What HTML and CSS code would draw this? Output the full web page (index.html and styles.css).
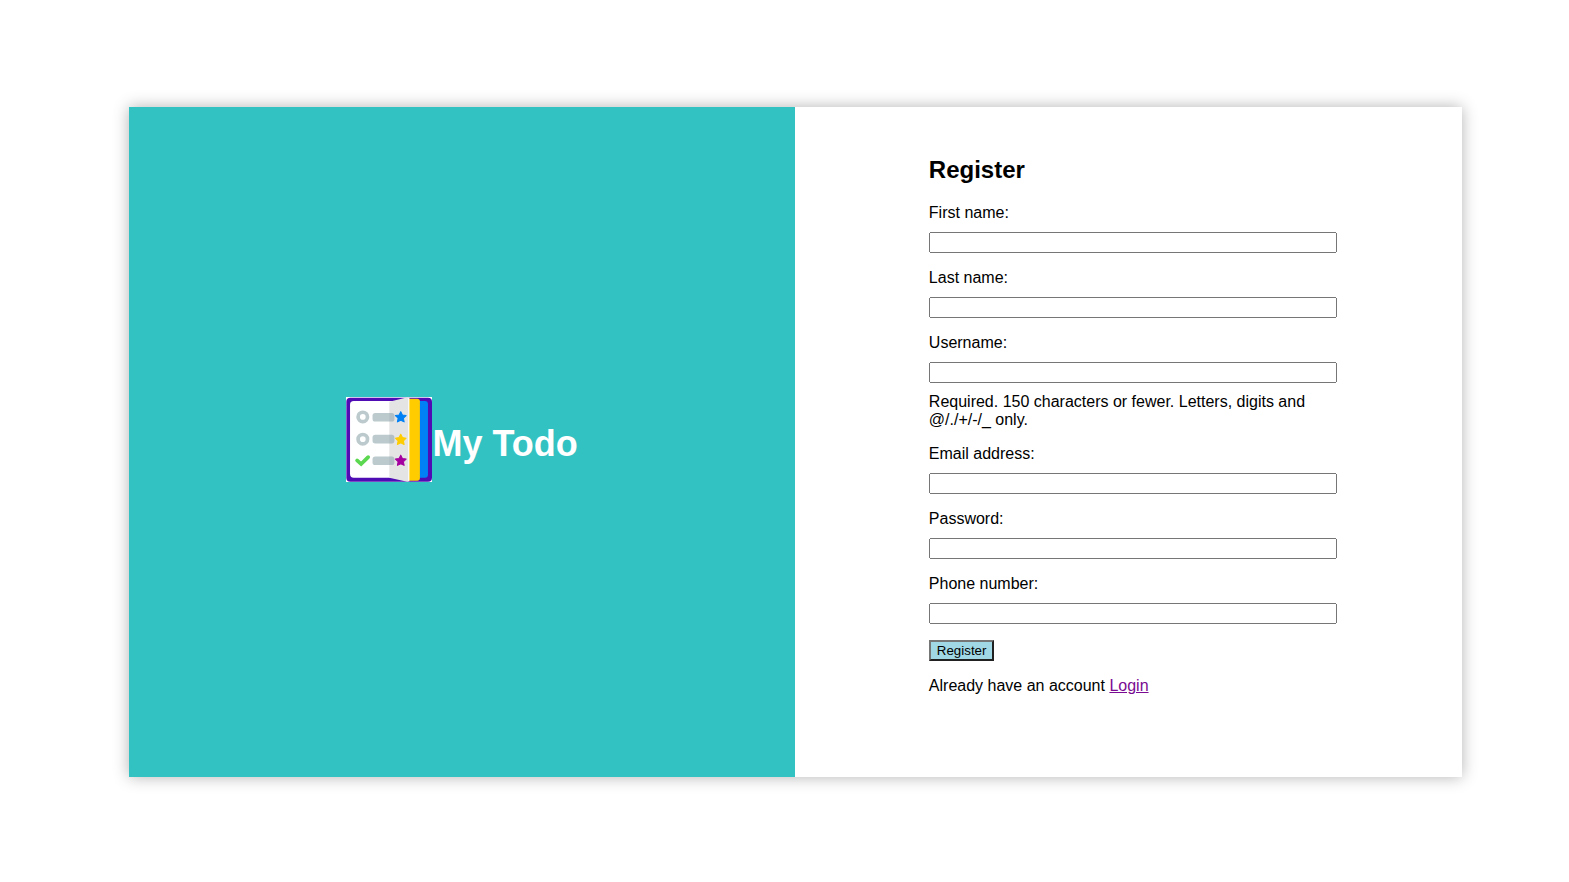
FILE: index.html
```html
<!DOCTYPE html>
<html lang="en">
<head>
<meta charset="utf-8">
<title>My Todo - Register</title>
<link rel="stylesheet" href="styles.css">
</head>
<body>
<main class="card">
  <section class="brand">
    <svg class="logo" viewBox="0 0 256 256" preserveAspectRatio="none" aria-hidden="true">
      <rect width="256" height="256" fill="#fff"/>
      <rect x="1" y="2" width="255" height="253" rx="12" fill="#500cb4"/>
      <rect x="12" y="12" width="160" height="231" rx="11" fill="#fff"/>
      <rect x="198" y="12" width="46" height="231" rx="9" fill="#0080f5"/>
      <rect x="180" y="5" width="40" height="247" rx="8" fill="#fc0"/>
      <path d="M129 14L183 1Q188 0 188 5V250Q188 256 182 255L129 243Z" fill="#e4e4e4"/>
      <path d="M187 3V254" stroke="#fff" stroke-width="3"/>
      <g fill="none" stroke="#bccace" stroke-width="11">
        <circle cx="50" cy="60" r="14"/>
        <circle cx="50" cy="127" r="14"/>
      </g>
      <g fill="#bccace">
        <rect x="79" y="48" width="65" height="26" rx="8"/>
        <rect x="79" y="114" width="65" height="26" rx="8"/>
        <rect x="79" y="179" width="65" height="26" rx="8"/>
      </g>
      <g fill="#a0adb2" fill-opacity=".35">
        <path d="M129 48h7q8 0 8 8v10q0 8-8 8h-7zM129 114h7q8 0 8 8v10q0 8-8 8h-7zM129 179h7q8 0 8 8v10q0 8-8 8h-7z"/>
      </g>
      <path d="M33 191L45 202L66 181" fill="none" stroke="#5bd750" stroke-width="11" stroke-linecap="round"/>
      <path d="M163 44L168 54L179 56L171 64L173 75L163 70L153 75L155 64L147 56L158 54Z" fill="#0080f5" stroke="#0080f5" stroke-width="3" stroke-linejoin="round"/>
      <path d="M163 112L168 122L179 124L171 132L173 143L163 138L153 143L155 132L147 124L158 122Z" fill="#fc0" stroke="#fc0" stroke-width="3" stroke-linejoin="round"/>
      <path d="M163 175L168 185L179 187L171 195L173 206L163 201L153 206L155 195L147 187L158 185Z" fill="#a400a0" stroke="#a400a0" stroke-width="3" stroke-linejoin="round"/>
    </svg>
    <h1 class="name">My Todo</h1>
  </section>
  <section class="panel">
    <form class="form">
      <h2 class="title">Register</h2>
      <div class="field"><label for="first">First name:</label><input id="first" type="text"></div>
      <div class="field"><label for="last">Last name:</label><input id="last" type="text"></div>
      <div class="field"><label for="user">Username:</label><input id="user" type="text" aria-describedby="user-help"><span id="user-help">Required. 150 characters or fewer. Letters, digits and @/./+/-/_ only.</span></div>
      <div class="field"><label for="email">Email address:</label><input id="email" type="email"></div>
      <div class="field"><label for="pass">Password:</label><input id="pass" type="password"></div>
      <div class="field"><label for="phone">Phone number:</label><input id="phone" type="text"></div>
      <button class="submit" type="submit">Register</button>
      <p class="login">Already have an account <a href="#login">Login</a></p>
    </form>
  </section>
</main>
</body>
</html>
```
FILE: styles.css
```css
body {
  box-sizing: border-box;
  margin: 0;
  min-height: 100vh;
  padding-top: 2px;
  display: flex;
  align-items: center;
  background: #fff;
  color: #000;
  font: 16px/18px "Liberation Sans", Arial, sans-serif;
}

.card {
  display: grid;
  grid-template-columns: 1fr 1fr;
  width: 85%;
  min-height: 76vh;
  margin-left: 8.2%;
  background: #fff;
  box-shadow: 0 0 15px rgba(0, 0, 0, 0.3);
}

.brand {
  display: flex;
  align-items: center;
  justify-content: center;
  background: #33c2c2;
  color: #fff;
}

.logo {
  width: 86px;
  height: 85px;
  margin-bottom: 6px;
}

.name {
  margin: 0;
  padding-top: 4px;
  font-size: 36px;
  line-height: 42px;
}

.panel {
  padding: 49px 0 32px 20%;
}

.form {
  width: 75%;
}

.title {
  margin: 0 0 21px;
  font-size: 24px;
  line-height: 27px;
}

.field {
  display: flex;
  flex-direction: column;
  gap: 10px;
  margin-bottom: 16px;
}

.field input {
  box-sizing: content-box;
  width: 100%;
  height: 15px;
  margin: 0;
  padding: 1px 2px;
}

.submit {
  display: block;
  padding: 1px 6px;
  border: 2px solid;
  border-color: #767676 #212121 #212121 #767676;
  background: #a0d8e6;
  color: #000;
  font-family: "Liberation Sans", Arial, sans-serif;
}

.login {
  margin: 16px 0 0;
}

.login a {
  color: #7a0a91;
}
```
